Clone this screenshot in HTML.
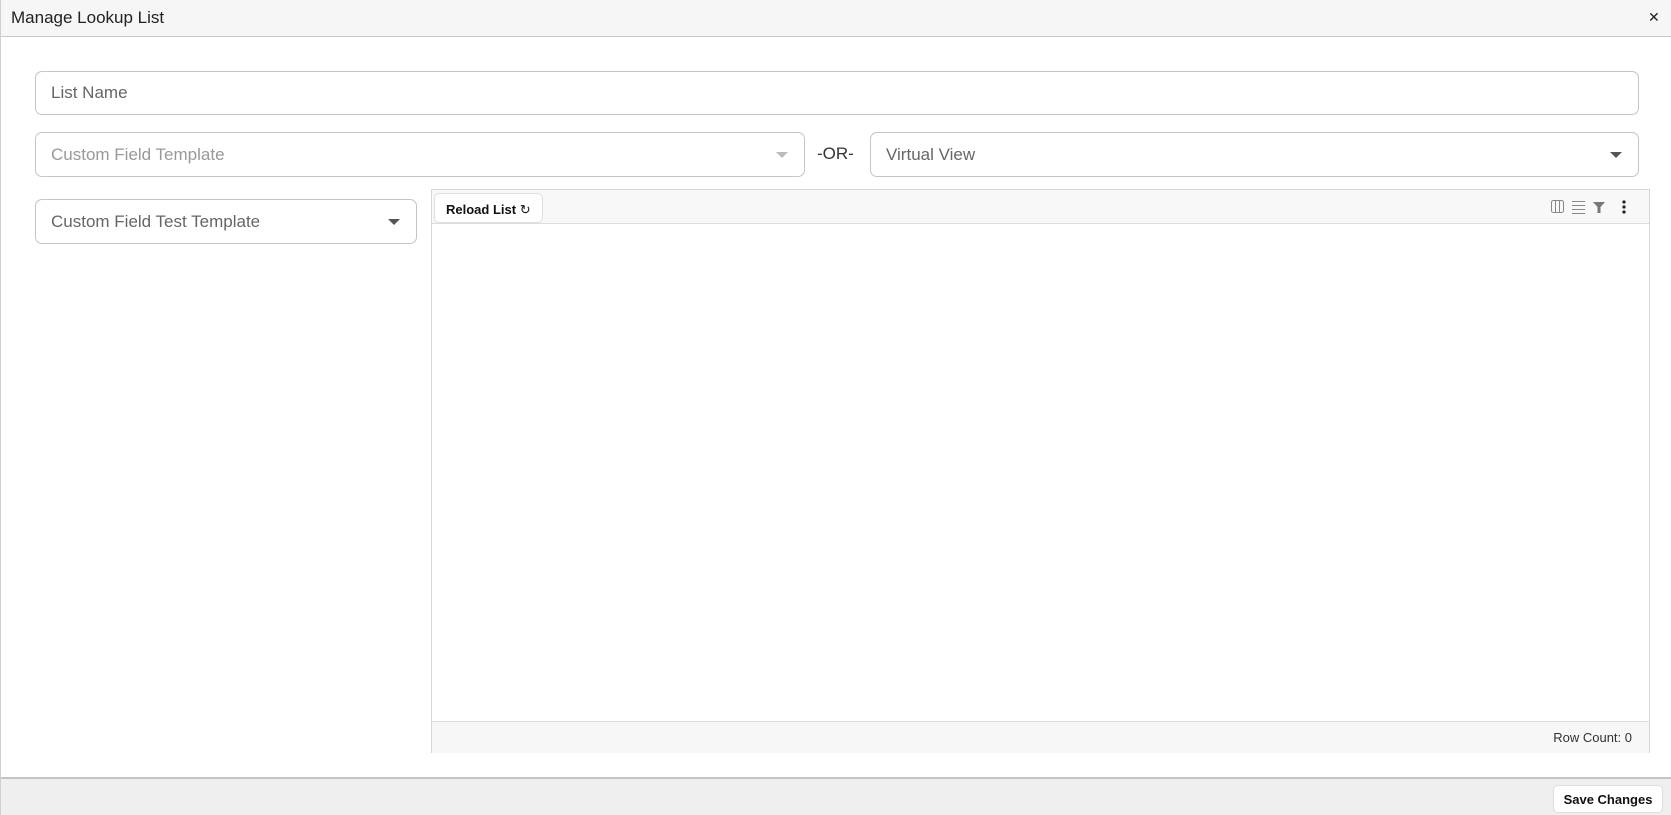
<!DOCTYPE html>
<html><head><style>
*{box-sizing:border-box;margin:0;padding:0}
body{width:1671px;height:815px;overflow:hidden;background:#fff;font-family:"Liberation Sans",sans-serif;position:relative;border-left:1px solid #d0d0d0}
.abs{position:absolute}
.hdr{left:0;top:0;width:1671px;height:37px;background:#f6f6f6;border-bottom:1px solid #c8c8c8}
.title{left:10px;top:8px;font-size:17px;color:#222}
.x{left:1647px;top:9px;font-size:14px;color:#222}
.inp{border:1px solid #c4c4c4;border-radius:7px;background:#fff;font-size:17px;color:#666;padding-left:15px;display:flex;align-items:center}
.arr{position:absolute;right:16px;top:50%;margin-top:-3px;width:0;height:0;border-left:6px solid transparent;border-right:6px solid transparent;border-top:6px solid #555}
.grid{left:430px;top:189px;width:1219px;height:564px;border:1px solid #d6d6d6;border-bottom:none}
.tb{left:0;top:0;width:100%;height:34px;background:#f8f8f8;border-bottom:1px solid #ddd}
.btn{left:2px;top:3px;width:109px;height:30px;border:1px solid #ddd;border-radius:5px;background:#fff;font-size:13px;font-weight:bold;padding:8px 0 0 11px;color:#111}
.ft{left:0;bottom:0;width:100%;height:32px;background:#f7f7f7;border-top:1px solid #ddd;font-size:13px;color:#333;text-align:right;padding:8px 17px 0 0}
.bot{left:0;top:777px;width:1671px;height:38px;background:#efefef;border-top:2px solid #c4c4c4}
.save{left:1552px;top:785px;width:110px;height:28px;background:#fff;border:1px solid #ddd;border-radius:5px;font-size:13px;font-weight:bold;color:#111;text-align:center;padding-top:6px}
</style></head><body>
<div class="abs hdr"></div>
<div class="abs title">Manage Lookup List</div>
<div class="abs x">✕</div>
<div class="abs inp" style="left:34px;top:71px;width:1604px;height:44px">List Name</div>
<div class="abs inp" style="left:34px;top:132px;width:770px;height:45px;color:#999">Custom Field Template<span class="arr" style="border-top-color:#bbb"></span></div>
<div class="abs" style="left:816px;top:144px;font-size:17px;color:#333">-OR-</div>
<div class="abs inp" style="left:869px;top:132px;width:769px;height:45px">Virtual View<span class="arr"></span></div>
<div class="abs inp" style="left:34px;top:199px;width:382px;height:45px">Custom Field Test Template<span class="arr"></span></div>
<div class="abs grid">
<div class="abs tb">
<div class="abs btn">Reload List <span style="font-weight:normal;font-size:13px">↻</span></div>
<svg class="abs" style="left:1118px;top:9px" width="90" height="16" viewBox="0 0 90 16">
<rect x="1.5" y="1.5" width="12" height="12" rx="2" fill="none" stroke="#888"/><line x1="5.5" y1="2" x2="5.5" y2="13" stroke="#888"/><line x1="9.5" y1="2" x2="9.5" y2="13" stroke="#888"/>
<g stroke="#888"><line x1="22" y1="2.5" x2="35" y2="2.5"/><line x1="22" y1="6.5" x2="35" y2="6.5"/><line x1="22" y1="10.5" x2="35" y2="10.5"/><line x1="22" y1="14.5" x2="35" y2="14.5"/></g>
<path d="M43 3h12l-4.5 5v6h-3v-6z" fill="#777"/>
<g fill="#222"><circle cx="74" cy="3" r="1.6"/><circle cx="74" cy="8" r="1.6"/><circle cx="74" cy="13" r="1.6"/></g>
</svg>
</div>
<div class="abs ft">Row Count: 0</div>
</div>
<div class="abs bot"></div>
<div class="abs save">Save Changes</div>
</body></html>
